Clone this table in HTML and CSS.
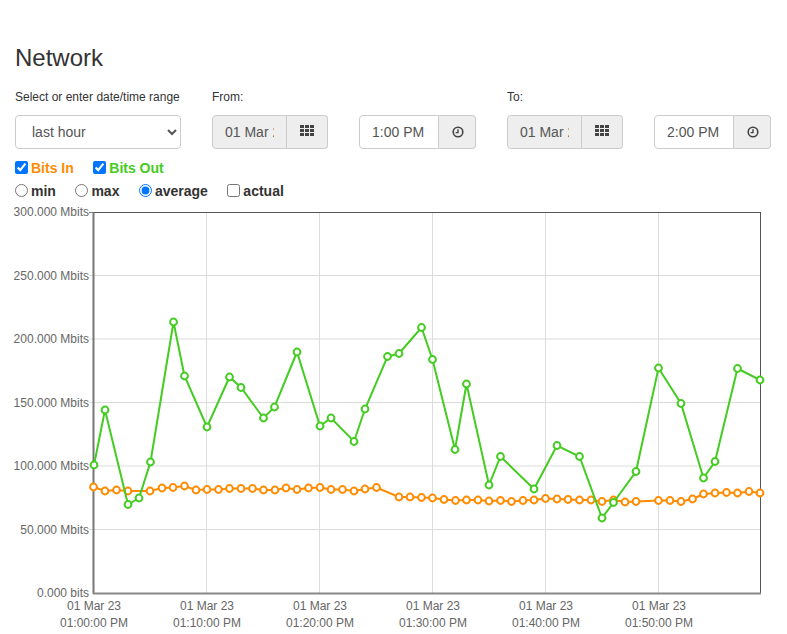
FILE: index.html
```html
<!DOCTYPE html>
<html>
<head>
<meta charset="utf-8">
<link rel="stylesheet" href="styles.css">
</head>
<body>
<div class="page">
  <h1 class="title">Network</h1>
  <div class="controls">
    <div class="field field-range">
      <label class="field-label">Select or enter date/time range</label>
      <select class="range-select">
        <option>last hour</option>
      </select>
    </div>
    <div class="field field-date">
      <label class="field-label">From:</label>
      <div class="group">
        <input class="inp inp-date" type="text" value="01 Mar 2023" readonly>
        <span class="addon addon-date">
          <svg width="14" height="11" viewBox="0 0 14 11"><g fill="#444"><rect x="0" y="0" width="4" height="3"/><rect x="5" y="0" width="4" height="3"/><rect x="10" y="0" width="4" height="3"/><rect x="0" y="4" width="4" height="3"/><rect x="5" y="4" width="4" height="3"/><rect x="10" y="4" width="4" height="3"/><rect x="0" y="8" width="4" height="3"/><rect x="5" y="8" width="4" height="3"/><rect x="10" y="8" width="4" height="3"/></g></svg>
        </span>
      </div>
    </div>
    <div class="field field-time">
      <label class="field-label">&nbsp;</label>
      <div class="group">
        <input class="inp inp-time" type="text" value="1:00 PM">
        <span class="addon addon-time">
          <svg width="12" height="12" viewBox="0 0 12 12"><circle cx="6" cy="6" r="4.8" fill="none" stroke="#444" stroke-width="1.6"/><path d="M6 3.2V6.6H3.6" fill="none" stroke="#444" stroke-width="1.4"/></svg>
        </span>
      </div>
    </div>
    <div class="field field-date">
      <label class="field-label">To:</label>
      <div class="group">
        <input class="inp inp-date" type="text" value="01 Mar 2023" readonly>
        <span class="addon addon-date">
          <svg width="14" height="11" viewBox="0 0 14 11"><g fill="#444"><rect x="0" y="0" width="4" height="3"/><rect x="5" y="0" width="4" height="3"/><rect x="10" y="0" width="4" height="3"/><rect x="0" y="4" width="4" height="3"/><rect x="5" y="4" width="4" height="3"/><rect x="10" y="4" width="4" height="3"/><rect x="0" y="8" width="4" height="3"/><rect x="5" y="8" width="4" height="3"/><rect x="10" y="8" width="4" height="3"/></g></svg>
        </span>
      </div>
    </div>
    <div class="field field-time">
      <label class="field-label">&nbsp;</label>
      <div class="group">
        <input class="inp inp-time" type="text" value="2:00 PM">
        <span class="addon addon-time">
          <svg width="12" height="12" viewBox="0 0 12 12"><circle cx="6" cy="6" r="4.8" fill="none" stroke="#444" stroke-width="1.6"/><path d="M6 3.2V6.6H3.6" fill="none" stroke="#444" stroke-width="1.4"/></svg>
        </span>
      </div>
    </div>
  </div>
  <div class="opts">
    <label class="opt opt-in"><input type="checkbox" checked>Bits In</label>
    <label class="opt opt-out"><input type="checkbox" checked>Bits Out</label>
  </div>
  <div class="opts">
    <label class="opt"><input type="radio" name="agg">min</label>
    <label class="opt"><input type="radio" name="agg">max</label>
    <label class="opt"><input type="radio" name="agg" checked>average</label>
    <label class="opt"><input type="checkbox">actual</label>
  </div>
</div>
<svg class="chart" width="787" height="434" viewBox="0 200 787 434">
  <g class="grid" stroke="#dcdcdc" stroke-width="1">
    <line x1="89" y1="276.5" x2="760.5" y2="276.5"/>
    <line x1="89" y1="340" x2="760.5" y2="340"/>
    <line x1="89" y1="403.5" x2="760.5" y2="403.5"/>
    <line x1="89" y1="467" x2="760.5" y2="467"/>
    <line x1="89" y1="530.5" x2="760.5" y2="530.5"/>
    <line x1="206.5" y1="213" x2="206.5" y2="594"/>
    <line x1="319.5" y1="213" x2="319.5" y2="594"/>
    <line x1="432.5" y1="213" x2="432.5" y2="594"/>
    <line x1="545.5" y1="213" x2="545.5" y2="594"/>
    <line x1="658.5" y1="213" x2="658.5" y2="594"/>
  </g>
  <rect x="93.5" y="213.5" width="667" height="381" fill="none" stroke="#555" stroke-width="1"/>
  <line x1="93.5" y1="213" x2="93.5" y2="595" stroke="#777" stroke-width="2"/>
  <line x1="93" y1="594.5" x2="761" y2="594.5" stroke="#888" stroke-width="2"/>
  <line x1="89" y1="213.5" x2="93" y2="213.5" stroke="#777"/>
  <g class="ylab" text-anchor="end">
    <text x="89" y="217">300.000 Mbits</text>
    <text x="89" y="280.5">250.000 Mbits</text>
    <text x="89" y="344">200.000 Mbits</text>
    <text x="89" y="407.5">150.000 Mbits</text>
    <text x="89" y="471">100.000 Mbits</text>
    <text x="89" y="534.5">50.000 Mbits</text>
    <text x="89" y="598">0.000 bits</text>
  </g>
  <g class="xlab" text-anchor="middle">
    <text x="94" y="611">01 Mar 23</text><text x="94" y="628">01:00:00 PM</text>
    <text x="207" y="611">01 Mar 23</text><text x="207" y="628">01:10:00 PM</text>
    <text x="320" y="611">01 Mar 23</text><text x="320" y="628">01:20:00 PM</text>
    <text x="433" y="611">01 Mar 23</text><text x="433" y="628">01:30:00 PM</text>
    <text x="546" y="611">01 Mar 23</text><text x="546" y="628">01:40:00 PM</text>
    <text x="659" y="611">01 Mar 23</text><text x="659" y="628">01:50:00 PM</text>
  </g>
  <g id="series"></g>
</svg>
<script src="chart.js"></script>
</body>
</html>
```
FILE: chart.js
```js
(function () {
  var orange = [[93.5,488],[105,492],[116.5,491],[128,492],[150,492],[162,489],[173,488.5],[184.5,487],[196,491],[207,490.5],[218.5,490.5],[229.5,489.5],[241,489.5],[252.5,489.5],[263.5,491],[275,491],[286,489],[297,490.5],[308.5,489],[320,488.5],[331,490.5],[342.5,490.5],[354,492],[365,490],[376.5,488.5],[399,498],[410,498],[421.5,498.5],[432.5,499],[444,500.5],[455.5,501.5],[466.5,501],[478,501],[489,502],[500.5,501.5],[511.5,502.5],[523,501.5],[534,501],[545.5,499.5],[557,500],[568,500.5],[579.5,501],[591,501],[602,502.5],[613.5,501],[625,503],[636,502.5],[658.5,501.5],[670,501.5],[681,502.5],[692.5,500],[703.5,495],[715,494],[726.5,493.5],[737.5,494],[749,492.5],[760,494]];
  var green = [[94,466],[105,411],[128,505.5],[139,499],[150.5,463],[173.5,323],[184.5,377],[207,428],[229.5,378],[241,388.5],[263.5,419],[274.5,408],[297,353],[320,427],[331,419],[354,442.5],[365,410],[387.5,357.5],[399,354.5],[421.5,328.5],[432.5,360.5],[455,450.5],[466.5,385],[489,486],[500.5,457.5],[534,490],[557,446.5],[579.5,457.5],[602,519],[613.5,503.5],[636,472.5],[658.5,369],[681,404.5],[703.5,479],[715,462.5],[737.5,369.5],[760,381]];
  var ns = "http://www.w3.org/2000/svg";
  var g = document.getElementById("series");
  function draw(pts, color) {
    var pl = document.createElementNS(ns, "polyline");
    pl.setAttribute("points", pts.map(function (p) { return p.join(","); }).join(" "));
    pl.setAttribute("fill", "none");
    pl.setAttribute("stroke", color);
    pl.setAttribute("stroke-width", "2");
    g.appendChild(pl);
    pts.forEach(function (p) {
      var c = document.createElementNS(ns, "circle");
      c.setAttribute("cx", p[0]);
      c.setAttribute("cy", p[1]);
      c.setAttribute("r", "3.4");
      c.setAttribute("fill", "#fff");
      c.setAttribute("stroke", color);
      c.setAttribute("stroke-width", "2");
      g.appendChild(c);
    });
  }
  draw(orange, "#ff8c00");
  draw(green, "#44cc22");
})();
```
FILE: styles.css
```css
html, body {
  margin: 0;
  padding: 0;
  background: #fff;
}
body {
  font-family: "Liberation Sans", Arial, sans-serif;
  color: #333;
  font-size: 14px;
}
.page {
  padding: 0 15px;
}
.title {
  margin: 45px 0 0;
  font-size: 24px;
  line-height: 26px;
  font-weight: 500;
  color: #333;
}
.controls {
  display: flex;
  gap: 31px;
  margin-top: 19px;
}
.field {
  display: flex;
  flex-direction: column;
}
.field-label {
  font-size: 12px;
  line-height: 14px;
  height: 14px;
  margin-bottom: 11px;
  color: #333;
}
.field-range { width: 166px; }
.field-date { width: 116px; }
.field-time { width: 117px; }
.range-select {
  height: 34px;
  width: 166px;
  border: 1px solid #ccc;
  border-radius: 4px;
  background: #fff;
  color: #555;
  font-family: "Liberation Sans", Arial, sans-serif;
  font-size: 14px;
  padding: 0 8px 0 12px;
  box-sizing: border-box;
}
.group {
  display: flex;
  height: 34px;
}
.inp {
  box-sizing: border-box;
  height: 34px;
  border: 1px solid #ccc;
  border-radius: 4px 0 0 4px;
  padding: 0 12px;
  font-family: "Liberation Sans", Arial, sans-serif;
  font-size: 14px;
  color: #555;
  outline: none;
}
.inp-date {
  width: 75px;
  background: #eee;
}
.inp-time {
  width: 80px;
  background: #fff;
}
.addon {
  flex: 1;
  box-sizing: border-box;
  height: 34px;
  display: flex;
  align-items: center;
  justify-content: center;
  background: #eee;
  border: 1px solid #ccc;
  border-left: 0;
  border-radius: 0 4px 4px 0;
}
.addon-date svg { margin-top: -4px; }
.addon-time svg { margin-top: -1px; margin-left: 1px; }
.opts {
  display: flex;
  align-items: center;
  height: 23px;
}
.controls + .opts {
  margin-top: 7px;
}
.opt {
  display: flex;
  align-items: center;
  font-weight: bold;
  font-size: 14px;
  margin-right: 19.5px;
  color: #333;
}
.opt input {
  margin: 0 3px 0 0;
  width: 13px;
  height: 13px;
}
.opt-in { color: #ff8c00; }
.opt-out { color: #44cc22; }
.chart {
  display: block;
  margin-top: -3px;
}
.ylab text, .xlab text {
  font-family: "Liberation Sans", Arial, sans-serif;
  font-size: 12px;
  fill: #666;
}
```
